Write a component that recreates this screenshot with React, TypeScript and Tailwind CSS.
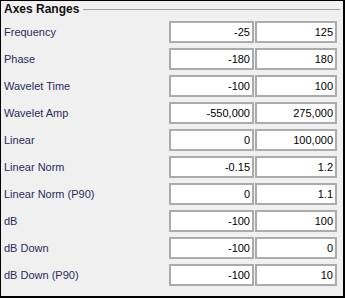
const rows: [string, string, string][] = [
  ["Frequency", "-25", "125"],
  ["Phase", "-180", "180"],
  ["Wavelet Time", "-100", "100"],
  ["Wavelet Amp", "-550,000", "275,000"],
  ["Linear", "0", "100,000"],
  ["Linear Norm", "-0.15", "1.2"],
  ["Linear Norm (P90)", "0", "1.1"],
  ["dB", "-100", "100"],
  ["dB Down", "-100", "0"],
  ["dB Down (P90)", "-100", "10"],
];

function Field({ value, width }: { value: string; width: string }) {
  return (
    <div
      className={`${width} flex h-[22px] items-center justify-end border-2 border-[#ababab] bg-white pr-[2px] text-[11px] text-black`}
    >
      {value}
    </div>
  );
}

export default function App() {
  return (
    <div
      className="box-border flex h-[298px] w-[345px] flex-col border-t border-l border-r-2 border-b-2 border-black bg-[#f0f0f0]"
      style={{ fontFamily: '"Liberation Sans", Arial, sans-serif' }}
    >
      <div className="mb-[4px] flex h-[16px] items-center pl-[3px] pr-[3px]">
        <span className="text-[12px] font-bold text-[#111]">Axes Ranges</span>
        <div className="ml-[4px] h-px flex-1 bg-[#a0a0a0]" />
      </div>
      <div className="flex flex-col gap-[5px]">
        {rows.map(([label, min, max]) => (
          <div key={label} className="flex items-center pl-[3px] pr-[6px]">
            <span className="flex-1 text-[11px] text-[#2b2b5c]">{label}</span>
            <div className="flex gap-[1px]">
              <Field value={min} width="w-[85px]" />
              <Field value={max} width="w-[82px]" />
            </div>
          </div>
        ))}
      </div>
    </div>
  );
}
